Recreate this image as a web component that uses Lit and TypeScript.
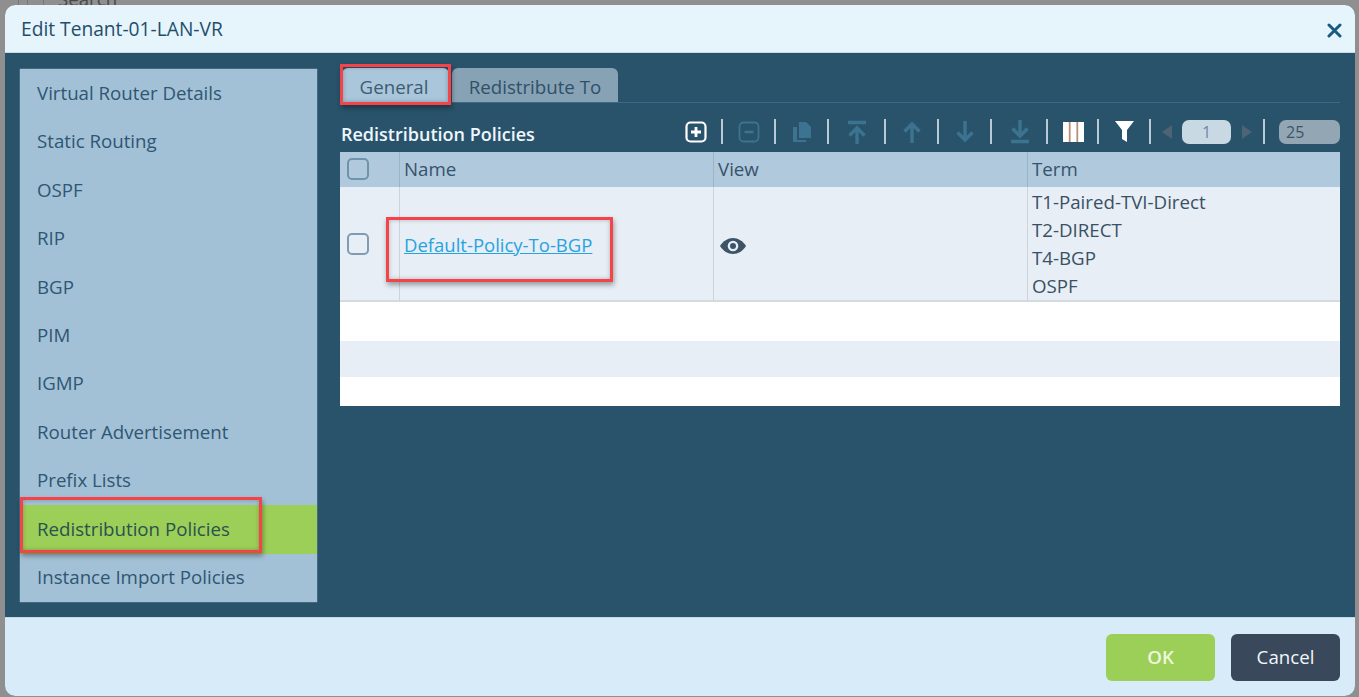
import { LitElement, html, css, svg } from "lit";
import { customElement } from "lit/decorators.js";

const NAV = ["Virtual Router Details","Static Routing","OSPF","RIP","BGP","PIM","IGMP","Router Advertisement","Prefix Lists","Redistribution Policies","Instance Import Policies"];
const ic = (w: number, body: unknown) => html`<span class="slot" style="width:${w}px">${body}</span>`;
const sep = html`<i class="sep"></i>`;
const dim = "#3c7391";
const arrow = (d: string) => svg`<svg width="22" height="24" viewBox="0 0 22 24" fill="none" stroke="${dim}" stroke-width="3.4">${svg`<path d="${d}"/>`}</svg>`;

@customElement("app-root")
export class AppRoot extends LitElement {
  static styles = css`
    :host { display: block; height: 697px; width: 1359px; overflow: hidden; background: #8f8f8f; font-family: "Open Sans", "Noto Sans", sans-serif; position: relative; }
    .strip { height: 5px; overflow: hidden; display: flex; align-items: flex-start; color: #4a4a4a; font-size: 18.7px; line-height: 5px; padding-left: 18px; }
    .strip i { width: 1px; height: 5px; background: #777; flex: none; }
    .strip i.gap { margin-left: 8px; }
    .strip i.gap2 { margin-left: 15px; }
    .strip span { display: block; margin-top: -4px; margin-left: 14px; }
    .dialog { margin: 0 4px 0 5px; height: 691px; border-radius: 10px; overflow: hidden; display: flex; flex-direction: column; background: #29536b; }
    .head { height: 47px; flex: none; background: #e6f4fc; border-bottom: 1px solid #c5dbe6; display: flex; align-items: center; justify-content: space-between; padding: 0 13px 0 16px; color: #1f4e6b; font-size: 19.2px; box-sizing: content-box; }
    .close { margin-top: 4px; }
    .body { flex: 1; display: flex; padding: 16px 15px 15px 15px; gap: 23px; min-height: 0; }
    .nav { width: 297px; height: 533px; flex: none; background: #a3c1d6; box-shadow: 0 0 1px #c5d9e6; display: flex; flex-direction: column; }
    .nav div { flex: 1; display: flex; align-items: center; padding: 0 0 2px 17px; color: #2f5673; font-size: 18.7px; }
    .nav div.on { background: #9ccf58; color: #2b5150; }
    .main { flex: 1; min-width: 0; display: flex; flex-direction: column; }
    .tabs { display: flex; height: 34px; gap: 3px; align-items: flex-end; border-bottom: 1px solid #3b6a84; margin-left: 2px; flex: none; box-sizing: border-box; }
    .tab { height: 34px; display: flex; align-items: center; justify-content: center; border-radius: 6px 6px 0 0; font-size: 18.7px; color: #2f5069; box-sizing: border-box; padding-top: 2px; flex: none; }
    .tab.a { width: 107px; background: #a9c6da; color: #3d5d76; padding-right: 3px; }
    .tab.b { width: 166px; background: #88a2b5; }
    .bar { display: flex; align-items: center; height: 49px; flex: none; padding-top: 8px; box-sizing: border-box; }
    .title { color: #eef7fc; font-size: 18px; font-weight: 600; width: 328px; flex: none; padding-top: 4px; margin-left: 1px; white-space: nowrap; }
    .tools { display: flex; align-items: center; height: 26px; }
    .slot { display: flex; align-items: center; justify-content: center; flex: none; height: 26px; padding-left: 2px; box-sizing: border-box; }
    .sep { width: 2px; height: 25px; background: #b8cad5; flex: none; margin: 0 -0.5px; }
    .sep.last { margin-left: 10.5px; }
    .page { width: 49px; height: 24px; background: #c9d9e4; border-radius: 7px; color: #6d8aa3; font-size: 16px; display: flex; align-items: center; justify-content: center; flex: none; margin: 0 11px 0 0; }
    .size { width: 61px; height: 24px; background: #93a6b3; border-radius: 7px; color: #3d5568; font-size: 16px; display: flex; align-items: center; padding-left: 7px; box-sizing: border-box; flex: none; margin-left: 15px; }
    .tbl { width: 1000px; height: 254px; background: #fff; display: grid; grid-template-columns: 59px 314px 314px 313px; grid-template-rows: 35px 115px 39px 36px 29px; color: #3a5064; font-size: 18.7px; }
    .tbl > div { display: flex; align-items: center; box-sizing: border-box; padding-left: 4px; }
    .tbl > .th { background: #b0c9dc; border-left: 1px solid #9bb4c7; color: #36536d; padding-bottom: 2px; }
    .tbl > .td { background: #e7eef5; border-left: 1px solid #ccd3d9; border-bottom: 2px solid #d5dadf; padding-top: 1px; }
    .tbl > .first { border-left: none; padding-left: 7px; }
    .tbl > .td.first { padding-top: 1px; }
    .tbl > .blank { grid-column: 1 / -1; background: #fff; }
    .tbl > .stripe { background: #e7eef5; }
    .cb { width: 22px; height: 22px; border: 2px solid #7f9cb2; border-radius: 5px; box-sizing: border-box; }
    .th .cb { background: #b0c9dc; border-color: #6f93ab; }
    a { color: #28a3e0; text-decoration: underline; font-size: 18.5px; }
    .terms { display: block; line-height: 28.1px; }
    .eye { margin: 3px 0 0 2px; }
    .foot { height: 79px; flex: none; background: #d7ecf8; display: flex; align-items: center; justify-content: flex-end; gap: 16px; padding: 0 15px 0 0; border-top: 1px solid #c3d8e4; box-sizing: border-box; }
    .btn { width: 109px; height: 47px; border-radius: 6px; display: flex; align-items: center; justify-content: center; font-size: 18.7px; font-weight: 600; padding-bottom: 2px; box-sizing: border-box; }
    .ok { background: #9ccf58; color: #eef7dd; }
    .cancel { background: #39485a; color: #f2f6fa; font-weight: 400; }
    .mark { position: absolute; border: 3px solid #f4444a; box-sizing: border-box; box-shadow: 1px 3px 5px rgba(0,0,0,.35), inset 0 0 4px rgba(0,0,0,.25); pointer-events: none; }
    .m1 { left: 340px; top: 64px; width: 111px; height: 41px; }
    .m2 { left: 386px; top: 217px; width: 227px; height: 65px; }
    .m3 { left: 20px; top: 497px; width: 242px; height: 56px; }
  `;

  render() {
    return html`
      <div class="strip"><i></i><i class="gap"></i><i class="gap2"></i><span>Search</span></div>
      <div class="dialog">
        <div class="head"><span>Edit Tenant-01-LAN-VR</span>
          <svg class="close" width="15" height="15" viewBox="0 0 15 15" stroke="#1b5a80" stroke-width="3" stroke-linecap="round"><path d="M2 2 13 13M13 2 2 13"/></svg>
        </div>
        <div class="body">
          <div class="nav">${NAV.map((n, i) => html`<div class=${i === 9 ? "on" : ""}>${n}</div>`)}</div>
          <div class="main">
            <div class="tabs"><div class="tab a">General</div><div class="tab b">Redistribute To</div></div>
            <div class="bar">
              <div class="title">Redistribution Policies</div>
              <div class="tools">
                ${ic(52, html`<svg width="22" height="22" viewBox="0 0 22 22" fill="none"><rect x="1.5" y="1.5" width="19" height="19" rx="4" stroke="#fff" stroke-width="2.2"/><path d="M11 6v10M6 11h10" stroke="#fff" stroke-width="2.8"/></svg>`)}${sep}
                ${ic(52, html`<svg width="22" height="22" viewBox="0 0 22 22" fill="none"><rect x="1.5" y="1.5" width="19" height="19" rx="4" stroke="${dim}" stroke-width="1.8"/><path d="M6.5 11h9" stroke="${dim}" stroke-width="2.4"/></svg>`)}${sep}
                ${ic(52, html`<svg width="20" height="22" viewBox="0 0 20 22" fill="${dim}"><path d="M7 1h7l5 5v11H7z"/><path d="M1 6h4v13h9v2H1z"/></svg>`)}${sep}
                ${ic(56, arrow("M11 24V9M3.5 15.5 11 8l7.5 7.5M2 2.5h18"))}${sep}
                ${ic(52, arrow("M11 23V4M3.5 11.5 11 4l7.5 7.5"))}${sep}
                ${ic(52, arrow("M11 1v19M3.5 12.5 11 20l7.5-7.5"))}${sep}
                ${ic(55, arrow("M11 0v15M3.5 8.5 11 16l7.5-7.5M2 21.5h18"))}${sep}
                ${ic(50, html`<svg width="21" height="20" viewBox="0 0 21 20"><path d="M0 0h21v20H0z" fill="#b98f72"/><path d="M0 0h5.800v20H0zM7.600 0h5.800v20H7.600zM15.200 0H21v20h-5.800z" fill="#fff"/></svg>`)}${sep}
                ${ic(51, html`<svg width="19" height="21" viewBox="0 0 19 21" fill="#fff"><path d="M0 0h19l-7 9v12l-5-3V9z"/></svg>`)}${sep}
                ${ic(32, html`<svg width="10" height="14" viewBox="0 0 10 14" fill="#4e6373"><path d="M10 0v14L0 7z"/></svg>`)}
                <span class="page">1</span>
                <svg width="10" height="14" viewBox="0 0 10 14" fill="#4e6373"><path d="M0 0v14l10-7z"/></svg>
                <i class="sep last"></i>
                <span class="size">25</span>
              </div>
            </div>
            <div class="tbl">
              <div class="th first"><span class="cb"></span></div><div class="th">Name</div><div class="th">View</div><div class="th">Term</div>
              <div class="td first"><span class="cb"></span></div>
              <div class="td"><a>Default-Policy-To-BGP</a></div>
              <div class="td"><svg class="eye" width="26" height="16" viewBox="0 0 26 16"><path d="M0 8C3 3 8 0 13 0s10 3 13 8c-3 5-8 8-13 8S3 13 0 8z" fill="#3d5468"/><circle cx="13" cy="8" r="5.300" fill="#e7eef5"/><circle cx="13" cy="8" r="3" fill="#3d5468"/></svg></div>
              <div class="td"><span class="terms">T1-Paired-TVI-Direct<br>T2-DIRECT<br>T4-BGP<br>OSPF</span></div>
              <div class="blank"></div><div class="blank stripe"></div><div class="blank"></div>
            </div>
          </div>
        </div>
        <div class="foot"><div class="btn ok">OK</div><div class="btn cancel">Cancel</div></div>
      </div>
      <div class="mark m1"></div><div class="mark m2"></div><div class="mark m3"></div>`;
  }
}
